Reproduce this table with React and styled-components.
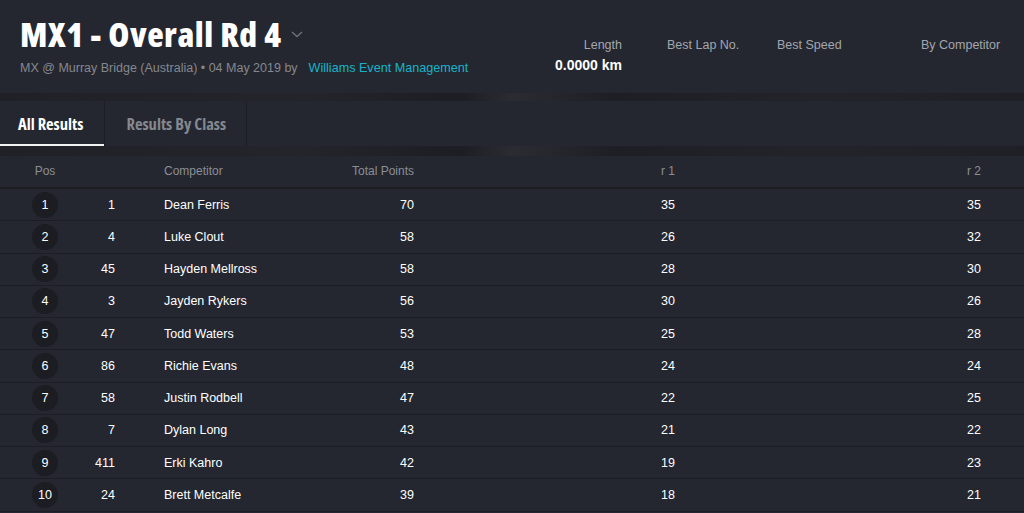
import React from "react";
import styled, { createGlobalStyle } from "styled-components";

const Global = createGlobalStyle`
  html, body { margin: 0; padding: 0; background: #242730; }
  body { font-family: "Liberation Sans", Arial, sans-serif; color: #fff; }
  * { box-sizing: border-box; }
`;

const Page = styled.div`
  width: 1024px;
  height: 513px;
  overflow: hidden;
  background: #242730;
`;

const Header = styled.header`
  height: 93px;
  display: flex;
  justify-content: space-between;
  padding: 0 23px 0 20px;
`;

const TitleBlock = styled.div`
  display: flex;
  flex-direction: column;
  padding-top: 14px;
`;

const TitleRow = styled.div`
  display: flex;
  align-items: center;
  gap: 8px;
`;

const Title = styled.h1`
  margin: 0;
  font-family: "Open Sans", sans-serif;
  font-weight: 800;
  font-stretch: 75%;
  font-size: 34px;
  line-height: 40px;
  letter-spacing: 0.55px;
  color: #fff;
`;

const Sub = styled.div`
  margin-top: 7px;
  font-size: 12.5px;
  color: #85888f;
  white-space: nowrap;
`;

const Link = styled.a`
  color: #19b3c9;
  margin-left: 11px;
  font-size: 12.6px;
  text-decoration: none;
`;

const Stats = styled.div`
  display: flex;
  padding-top: 38px;
`;

const Stat = styled.div`
  width: ${(p) => p.$w}px;
  display: flex;
  flex-direction: column;
  align-items: ${(p) => (p.$right ? "flex-end" : "flex-start")};
  margin-left: ${(p) => p.$ml || 0}px;
`;

const StatLabel = styled.div`
  font-size: 12.5px;
  line-height: 14px;
  color: #a3a6ad;
  white-space: nowrap;
`;

const StatValue = styled.div`
  margin-top: 5px;
  font-size: 14px;
  font-weight: 700;
  color: #fff;
  white-space: nowrap;
`;

const Band = styled.div`
  height: ${(p) => p.$h}px;
  background: linear-gradient(90deg, #1f2126 0%, #23252b 30%, #1c1e23 45%, #2a2c31 50%, #1d1f24 60%, #222429 80%, #1e2025 100%);
`;

const Tabs = styled.nav`
  height: 45px;
  display: flex;
  background: #242730;
`;

const Tab = styled.div`
  height: 45px;
  padding: 0 ${(p) => p.$pr}px 1px ${(p) => p.$pl}px;
  display: flex;
  align-items: center;
  font-family: "Open Sans", sans-serif;
  font-stretch: 75%;
  font-weight: 700;
  font-size: 16.5px;
  color: ${(p) => (p.$active ? "#fff" : "#85888f")};
  border-right: 1px solid #1c1e24;
  box-shadow: ${(p) => (p.$active ? "inset 0 -2px 0 #f2f2f2" : "none")};
`;

const Table = styled.div`
  display: flex;
  flex-direction: column;
`;

const cols = "90px 25px 49px 150px 100px 261px 306px";

const HeadRow = styled.div`
  height: 33px;
  display: grid;
  grid-template-columns: ${cols};
  align-items: center;
  padding-bottom: 1px;
  border-bottom: 2px solid #1c1e23;
  font-size: 12px;
  color: #8b8e95;
`;

const Row = styled.div`
  height: 32.25px;
  display: grid;
  grid-template-columns: ${cols};
  align-items: center;
  border-bottom: 1px solid #1c1e23;
  font-size: 12.5px;
  color: #fff;
`;

const Cell = styled.div`
  text-align: ${(p) => p.$align || "left"};
  grid-column: ${(p) => p.$col};
  white-space: nowrap;
`;

const PosCircle = styled.div`
  grid-column: 1;
  justify-self: center;
  width: 26px;
  height: 26px;
  border-radius: 50%;
  background: #1b1d22;
  display: flex;
  align-items: center;
  justify-content: center;
  font-size: 12.5px;
`;

const rows = [
  [1, 1, "Dean Ferris", 70, 35, 35],
  [2, 4, "Luke Clout", 58, 26, 32],
  [3, 45, "Hayden Mellross", 58, 28, 30],
  [4, 3, "Jayden Rykers", 56, 30, 26],
  [5, 47, "Todd Waters", 53, 25, 28],
  [6, 86, "Richie Evans", 48, 24, 24],
  [7, 58, "Justin Rodbell", 47, 22, 25],
  [8, 7, "Dylan Long", 43, 21, 22],
  [9, 411, "Erki Kahro", 42, 19, 23],
  [10, 24, "Brett Metcalfe", 39, 18, 21],
];

export default function App() {
  return (
    <Page>
      <Global />
      <Header>
        <TitleBlock>
          <TitleRow>
            <Title>MX1 - Overall Rd 4</Title>
            <svg width="14" height="10" viewBox="0 0 14 10">
              <path d="M2 3 L7 7.5 L12 3" fill="none" stroke="#6d7079" strokeWidth="1.4" />
            </svg>
          </TitleRow>
          <Sub>
            MX @ Murray Bridge (Australia) • 04 May 2019 by
            <Link>Williams Event Management</Link>
          </Sub>
        </TitleBlock>
        <Stats>
          <Stat $w={66} $right>
            <StatLabel>Length</StatLabel>
            <StatValue>0.0000 km</StatValue>
          </Stat>
          <Stat $w={110} $ml={45}>
            <StatLabel>Best Lap No.</StatLabel>
          </Stat>
          <Stat $w={144}>
            <StatLabel>Best Speed</StatLabel>
          </Stat>
          <Stat $w={80}>
            <StatLabel>By Competitor</StatLabel>
          </Stat>
        </Stats>
      </Header>
      <Band $h={8} />
      <Tabs>
        <Tab $active $pl={18} $pr={21}>All Results</Tab>
        <Tab $pl={21} $pr={20}>Results By Class</Tab>
      </Tabs>
      <Band $h={10} />
      <Table>
        <HeadRow>
          <Cell $col={1} $align="center">Pos</Cell>
          <Cell $col={4}>Competitor</Cell>
          <Cell $col={5} $align="right">Total Points</Cell>
          <Cell $col={6} $align="right">r 1</Cell>
          <Cell $col={7} $align="right">r 2</Cell>
        </HeadRow>
        {rows.map((r) => (
          <Row key={r[0]}>
            <PosCircle>{r[0]}</PosCircle>
            <Cell $col={2} $align="right">{r[1]}</Cell>
            <Cell $col={4}>{r[2]}</Cell>
            <Cell $col={5} $align="right">{r[3]}</Cell>
            <Cell $col={6} $align="right">{r[4]}</Cell>
            <Cell $col={7} $align="right">{r[5]}</Cell>
          </Row>
        ))}
      </Table>
    </Page>
  );
}
